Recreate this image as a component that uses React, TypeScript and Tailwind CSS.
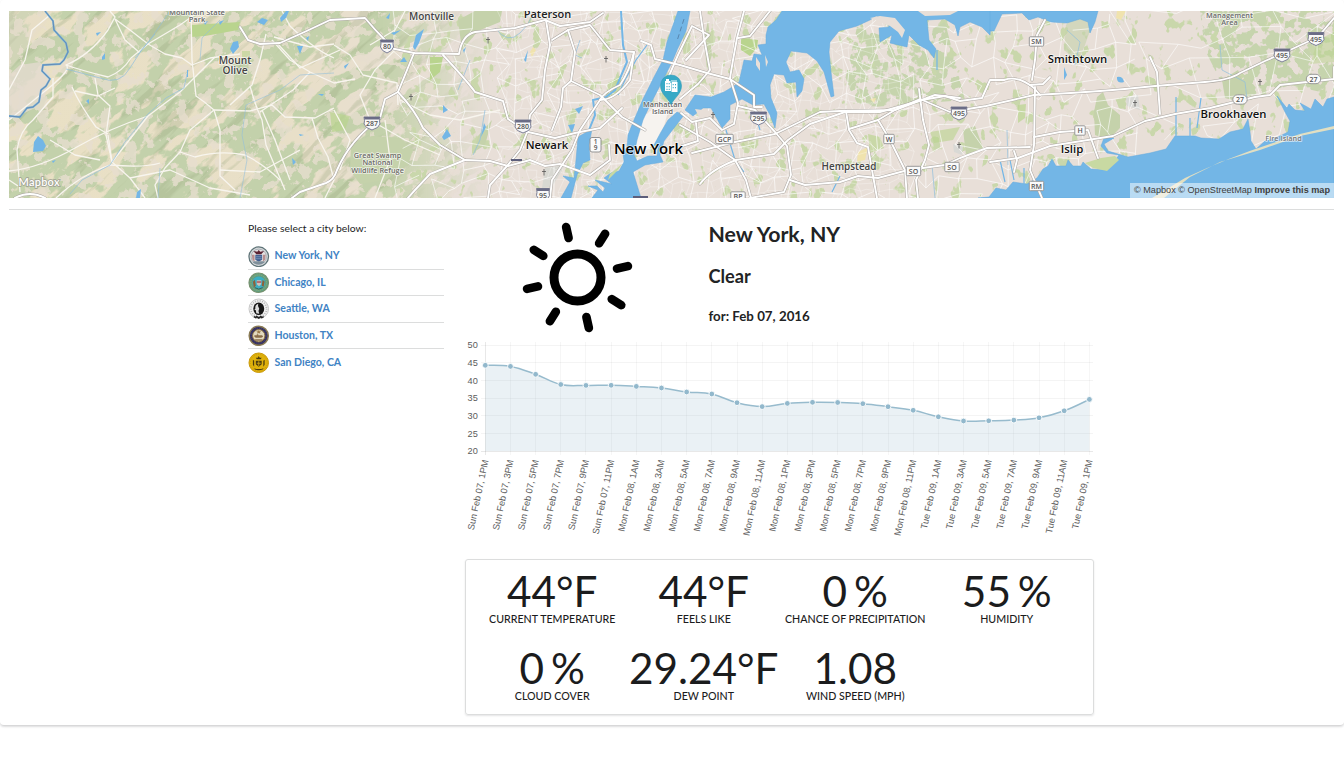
import React from "react";

const T = { fontFamily: '"Open Sans","Noto Sans",sans-serif' };

const terrainRoads = [
  "M9 120 Q28 105 50 87 T66 65 Q80 70 108 77 Q122 72 131 58 L148 44 L180 25 L200 11",
  "M66 65 Q90 55 108 30 L115 17 L110 11", "M9 171 Q40 168 75 148 T148 116 L180 92 L215 57",
  "M115 19 L130 30 L148 44 L165 54 L182 58 L192 65 Q203 61 210 58 L240 54",
  "M20 192 L17 150 Q20 130 33 120 L53 97 L53 78", "M72 87 Q80 105 96 127 L108 134",
  "M95 78 L98 95 L110 106 L106 135 L112 162 L148 116", "M108 135 L112 162 L130 178 L145 198",
  "M75 91 L98 96 L115 88", "M191 11 L192 60 L196 96 Q205 102 214 110 L220 130 L220 176 L235 190",
  "M214 110 L190 130 L180 152 L165 168 L155 185 L158 198", "M180 152 L195 157 Q220 150 245 155 Q265 165 280 180",
  "M9 180 L18 186", "M56 198 Q80 175 110 165 Q145 168 160 163", "M266 34 L260 60 L252 85 L230 105",
  "M272 40 L290 60 L310 72 L334 83 L355 79", "M214 110 L250 111 L272 105 L285 117 L315 118 L334 108",
  "M274 37 L310 47 L334 44", "M250 86 Q255 105 262 120 L266 145 L285 190", "M262 110 L275 140 L290 180",
  "M312 118 L318 138 L328 157 L334 180 L325 198", "M276 42 L300 68 L340 50", "M310 72 L293 90 L260 112",
  "M334 45 L350 55 L363 75 L397 83 L398 105", "M290 26 Q315 50 334 58", "M290 26 L282 11",
  "M9 90 L25 60 L32 30 L50 15", "M115 19 L125 40 L140 53", "M50 140 L75 155 L100 160",
  "M130 178 L170 170 L210 188 L250 195", "M220 170 L260 172 L300 150", "M395 50 L375 70 L360 95 L370 120 L405 140 L440 155",
  "M334 110 L350 140 L340 170", "M405 11 L395 30 L370 45", "M385 120 L390 160 L375 198", "M400 100 L430 115 L460 120 L500 110"
];
const majorRoads = [
  "M240 27 L248 40 L260 44 L280 43 Q305 32 330 20 L365 18 Q375 30 385 40 L390 48 L414 53 L459 54 Q462 35 475 32 L515 28 L545 20 L560 26 L590 22 L603 13",
  "M443 55 Q468 82 475 92 L503 101 L508 119 L528 132 L555 138 L575 133 L600 128 L622 108",
  "M414 53 L398 92 L385 99 L380 118 Q350 140 337 170 Q334 180 326 183 L300 192 L292 198",
  "M398 92 Q415 110 423 128 L440 145 L465 160 L430 174 L415 190 L408 198", "M465 160 L490 161 L508 166 L530 160 L545 166 L560 164 L590 175 L610 160 L609 145",
  "M546 20 L550 45 L545 70 L542 100 L530 115 L528 130 L520 150 L507 166 L490 185 L488 198",
  "M571 81 L563 88 L561 107 L552 130", "M568 30 L575 52 L571 81 L600 95 L622 117 L645 130",
  "M634 52 L630 80 Q615 100 600 100 L580 130 L572 150 L552 180 L550 198",
  "M600 100 Q604 92 620 85 Q630 70 634 52 L610 50 L590 25 L568 30 L552 40",
  "M641 41 L651 45 L655 59 L680 65 L707 73 L730 79 L754 95 L754 107 L762 107",
  "M686 60 L709 35 L692 26 L678 55 L665 85", "M744 11 L737 38 L733 60 L730 78 L738 103 L734 124 L722 130 L710 118 L692 122 L681 113",
  "M700 11 L704 38 L710 70 L698 84 L680 99", "M770 11 L750 36 L738 38", "M738 106 L755 110 L775 132 L787 146 L791 175 L784 192 L750 198",
  "M692 153 L735 142 L775 134 L820 112 L840 111 L895 110 L935 95 L960 98",
  "M700 184 Q710 170 736 160 L774 154 L788 140 L810 124 L845 112 L880 112 L905 105 L922 100 L945 96 L960 101 L982 98 L990 80 L1004 80 Q1018 75 1034 88 L1040 95",
  "M846 111 L849 130 L857 143 L868 147 L872 170 L877 198",
  "M849 129 L878 120 L895 110 L920 99 L950 112 L986 106 L1034 95 Q1100 92 1155 86 L1205 82 Q1230 80 1240 73 L1265 61 L1290 50 L1318 37 L1334 18",
  "M919 89 L923 120 L929 145 L925 160 L916 180 L918 198",
  "M878 120 L890 140 L905 170 L907 198", "M790 180 L805 185 L840 182 L858 176 L878 178 L908 170 L945 165 L960 158 L987 148 L1030 147",
  "M1035 87 L1034 145 L1030 170 L1042 198", "M1045 20 L1037 35 L1035 60 L1032 80", "M1030 85 L1043 84 L1050 77",
  "M1150 57 L1157 72 L1160 114", "M990 162 L1018 158 L1050 146 L1113 136 L1145 121 L1175 114 L1210 108 L1255 97 L1270 95 L1280 85 L1334 79 L1334 67",
  "M1034 137 L1060 132 L1088 130 L1098 158", "M1014 151 L1017 160 L1014 172",
  "M680 125 L710 142 L735 160 L746 180 L751 198", "M696 123 L698 141 L682 146"
];

function mesh(x0: number, x1: number, y0: number, y1: number, step: number, seed: number) {
  let s = seed;
  const r = () => { s = (s * 16807) % 2147483647; return s / 2147483647; };
  const cols = Math.ceil((x1 - x0) / step), rows = Math.ceil((y1 - y0) / step);
  const p: number[][][] = [];
  for (let i = 0; i <= cols; i++) {
    p.push([]);
    for (let j = 0; j <= rows; j++) p[i].push([x0 + i * step + (r() - 0.5) * step * 0.9, y0 + j * step + (r() - 0.5) * step * 0.9]);
  }
  let d = "";
  for (let i = 0; i <= cols; i++) for (let j = 0; j <= rows; j++) {
    const a = p[i][j];
    if (i < cols && r() > 0.22) d += `M${a[0].toFixed(1)} ${a[1].toFixed(1)}L${p[i + 1][j][0].toFixed(1)} ${p[i + 1][j][1].toFixed(1)}`;
    if (j < rows && r() > 0.22) d += `M${a[0].toFixed(1)} ${a[1].toFixed(1)}L${p[i][j + 1][0].toFixed(1)} ${p[i][j + 1][1].toFixed(1)}`;
  }
  return d;
}
const suburbs = mesh(400, 1130, 11, 200, 17, 77);
const urban = mesh(500, 910, 11, 200, 10, 913);
const east = mesh(1120, 1334, 11, 140, 26, 41);

type Label = [number, number, string, number, string?, number?];
const labels: Label[] = [
  [235, 64, "Mount", 10.2], [235, 74, "Olive", 10.2], [431.5, 19.8, "Montville", 10],
  [849, 170.3, "Hempstead", 9.9], [547.5, 18.3, "Paterson", 11, "#222", 600], [547, 149.3, "Newark", 11.3, "#111", 600],
  [648.5, 154, "New York", 14.9, "#000", 600], [1077.5, 62.7, "Smithtown", 11.3, "#111", 600],
  [1072, 153.2, "Islip", 11.4, "#111", 600], [1233.5, 118, "Brookhaven", 11.3, "#111", 600],
  [197, 15, "Mountain State", 7.5, "#666"], [197, 22, "Park", 7.5, "#666"],
  [377.5, 158, "Great Swamp", 7.3, "#6b6b66"], [377.5, 165.3, "National", 7.3, "#6b6b66"], [377.5, 172.6, "Wildlife Refuge", 7.3, "#6b6b66"],
  [662.5, 106.5, "Manhattan", 7.3, "#666"], [662.5, 113.5, "Island", 7.3, "#666"],
  [1229.5, 18, "Management", 7.3, "#6b6b6b"], [1229.5, 25, "Area", 7.3, "#6b6b6b"], [1283.5, 140.5, "Fire Island", 7.3, "#777"]
];

function Interstate({ x, y, n }: { x: number; y: number; n: string }) {
  const w = n.length > 2 ? 8 : 6.5;
  return (
    <g transform={`translate(${x} ${y})`}>
      <path d={`M${-w} -6H${w}Q${w - 1} -2 ${w} 1Q${w - 1} 5 0 7Q${1 - w} 5 ${-w} 1Q${1 - w} -2 ${-w} -6Z`} fill="#f8f8f8" stroke="#7d7f95" strokeWidth="1" />
      <path d={`M${-w} -6H${w}L${w - 0.7} -3.6H${0.7 - w}Z`} fill="#6a6c86" />
      <text x="0" y="3.4" textAnchor="middle" fontSize="7" fontWeight="600" fill="#555" style={T}>{n}</text>
    </g>
  );
}
function Plate({ x, y, n, round }: { x: number; y: number; n: string; round?: boolean }) {
  const w = n.length > 2 ? 8.7 : n.length > 1 ? 7.2 : 5.2;
  return (
    <g transform={`translate(${x} ${y})`}>
      <rect x={-w} y={-4.7} width={w * 2} height={9.4} rx={round ? 4.7 : 1} fill="#fafafa" stroke="#8f8f8f" strokeWidth="0.9" />
      <text x="0" y="2.6" textAnchor="middle" fontSize="7" fontWeight="600" fill="#555" style={T}>{n}</text>
    </g>
  );
}

const WATER = "#73b6e6";

function CityMap() {
  return (
    <svg className="block h-[187px] w-full" viewBox="9 11 1325 187" preserveAspectRatio="none">
      <defs>
        <filter id="forest" x="0" y="0" width="100%" height="100%" colorInterpolationFilters="sRGB">
          <feTurbulence type="fractalNoise" baseFrequency="0.024 0.05" numOctaves="5" seed="8" />
          <feColorMatrix values="0 0 0 0 .765  0 0 0 0 .82  0 0 0 0 .67  18 0 0 0 -7.6" />
        </filter>
        <filter id="hills" x="0" y="0" width="100%" height="100%" colorInterpolationFilters="sRGB">
          <feTurbulence type="fractalNoise" baseFrequency="0.014 0.1" numOctaves="4" seed="21" />
          <feColorMatrix values="0 0 0 0 .6  0 0 0 0 .66  0 0 0 0 .5  9 0 0 0 -5.1" />
        </filter>
        <filter id="parks" x="0" y="0" width="100%" height="100%" colorInterpolationFilters="sRGB">
          <feTurbulence type="fractalNoise" baseFrequency="0.085 0.065" numOctaves="3" seed="5" />
          <feColorMatrix values="0 0 0 0 .79  0 0 0 0 .845  0 0 0 0 .67  16 0 0 0 -10" />
        </filter>
        <filter id="woods" x="0" y="0" width="100%" height="100%" colorInterpolationFilters="sRGB">
          <feTurbulence type="fractalNoise" baseFrequency="0.09" numOctaves="3" seed="12" />
          <feColorMatrix values="0 0 0 0 .775  0 0 0 0 .83  0 0 0 0 .68  16 0 0 0 -7.2" />
        </filter>
        <filter id="meadow" x="0" y="0" width="100%" height="100%" colorInterpolationFilters="sRGB">
          <feTurbulence type="fractalNoise" baseFrequency="0.08" numOctaves="4" seed="33" />
          <feColorMatrix values="0 0 0 0 .905  0 0 0 0 .872  0 0 0 0 .81  18 0 0 0 -10" />
        </filter>
        <linearGradient id="land"><stop offset="0" stopColor="#e9e0c4" /><stop offset=".22" stopColor="#e8dfc8" /><stop offset=".34" stopColor="#e8dfd8" /></linearGradient>
        <linearGradient id="fade"><stop offset="0" stopColor="#fff" /><stop offset=".78" stopColor="#fff" /><stop offset="1" stopColor="#000" /></linearGradient>
        <mask id="west" maskUnits="userSpaceOnUse" x="0" y="0" width="520" height="210"><rect x="0" y="0" width="490" height="210" fill="url(#fade)" /></mask>
        <clipPath id="northShore"><path d="M857 27L905 44L945 22L965 100L860 108L845 80Z" /></clipPath>
        <clipPath id="pines"><path d="M1200 11H1334V95L1290 85L1250 100L1220 80L1205 50Z" /></clipPath>
      </defs>
      <rect x="9" y="11" width="1325" height="187" fill="url(#land)" />
      <g mask="url(#west)">
        <g transform="rotate(-40 250 100)"><rect x="-60" y="-180" width="640" height="560" filter="url(#forest)" /></g>
        <g transform="rotate(-43 250 100)" opacity=".3"><rect x="-60" y="-180" width="640" height="560" filter="url(#hills)" /></g>
        <rect x="9" y="11" width="500" height="187" filter="url(#meadow)" opacity=".8" />
      </g>
      <path d="M9 75L20 65L40 62L50 75L45 95L35 108L9 120Z" fill="#e4dbcf" opacity=".8" />
      <path d="M9 70L45 25L52 11H9Z" fill="#e6ddca" opacity=".4" />
      <rect x="400" y="11" width="934" height="187" filter="url(#parks)" />
      <g clipPath="url(#northShore)"><rect x="840" y="11" width="140" height="100" filter="url(#woods)" /></g>
      <g clipPath="url(#pines)"><rect x="1190" y="11" width="144" height="100" filter="url(#woods)" /></g>
      <g fill="#c5d2ab">
        <path d="M351 142L372 136L400 138L413 150L408 165L385 180L360 184L350 170Z" />
        <path d="M458 20L475 11L502 11L500 22L478 31L462 50Z" /><path d="M478 136L492 120L485 145L474 152Z" />
        <path d="M1097 97L1103 92L1108 105L1120 115L1120 128L1108 140L1095 135L1094 112Z" />
        <path d="M963 130L975 126L983 148L966 155Z" /><path d="M1070 20L1096 13L1085 45L1078 62L1064 50L1066 25Z" opacity=".6" />
        <path d="M1222 80L1238 70L1250 95L1240 102L1225 98Z" /><path d="M708 20L712 55L707 70L704 40Z" />
      </g>
      <g fill="#b9d48e">
        <path d="M191 25L240 22L238 30L205 36L191 37Z" /><path d="M430 57L443 57L440 72L430 80Z" /><path d="M330 112L350 116L345 130L332 132Z" opacity=".7" />
        <path d="M741 38L758 40L757 48L750 56L741 50Z" /><path d="M868 134L880 137L884 148L870 153Z" opacity=".65" /><path d="M608 83L622 75L620 92L605 100Z" opacity=".7" />
        <path d="M1018 105L1026 104L1025 118L1018 123Z" opacity=".7" /><path d="M930 132L960 127L953 140L934 143Z" opacity=".6" /><path d="M744 136L755 133L751 147L742 145Z" opacity=".5" />
        <path d="M242 51h8v6h-8z" opacity=".6" /><path d="M715 169L725 166L700 182L695 185Z" opacity=".6" />
        <path d="M1318 40L1334 32V62L1310 64Z" opacity=".5" />
      </g>
      <path d="M545 168L565 165L552 187L542 188Z" fill="#d8d8d2" /><path d="M1126 98L1138 95L1140 110L1127 106Z" fill="#d9d9d5" /><path d="M953 144L963 146L962 155L954 152Z" fill="#d9d9d5" />
      <path d="M533 47L536 50L532 57L530 52Z M858 152L868 147L865 160L857 162Z M870 99L876 98L874 103Z M1117 11L1126 11L1121 20L1116 18Z" fill="#f0e3ae" />
      <g fill="none" stroke="#fff" strokeLinejoin="round">
        <path d={suburbs} strokeWidth=".9" opacity=".7" /><path d={urban} strokeWidth=".7" opacity=".4" /><path d={east} strokeWidth=".9" opacity=".65" />
      </g>
      <path d="M632 140L642 118L655 107L668 112L660 140L640 155Z" fill="#f6f3ef" />
      <g fill="none" stroke="#f8f5ee" strokeWidth="1.3" strokeLinejoin="round">{terrainRoads.map((d) => <path key={d} d={d} />)}</g>
      <g fill="none" stroke="#8fbfdc" strokeWidth=".7">
        <path d="M155 34Q140 50 130 68T100 78L66 69M187 74L184 88L166 98L148 114L125 142L110 165L82 180L70 194" />
        <path d="M246 105L242 135L247 160L240 198M170 11L150 40L135 58M334 73L300 75L280 90L246 105M200 60L202 38L220 20M158 198L160 168" opacity=".8" />
        <path d="M495 28Q508 45 520 33T533 11M580 40L575 55L582 58M485 110L480 140L473 155M470 60L458 90M1067 30L1080 42L1075 65M1220 45L1222 70L1245 82L1247 100M1007 130L1008 165M932 165L935 198" />
      </g>
      <path d="M45 11L53 21L54 30L66 43L68 52L64 60L60 64L43 65L42 71L50 79L46 86L41 90L39 102L33 107L27 108L20 117L9 116" fill="none" stroke="#75b0d8" strokeWidth="1.900" />
      <path d="M45 11L53 21L54 30L66 43L68 52L64 60L60 64L43 65L42 71L50 79L46 86L41 90L39 102L33 107L27 108L20 117L9 116" fill="none" stroke="#5d7da8" strokeWidth=".7" />
      <g fill={WATER}>
        <path d="M34 142L38 136L43 140L46 146L43 151L33 152Z" /><path d="M230 49L233 42L238 41L239 47L233 54Z" /><path d="M102 57L105 53L105 59L102 60Z" /><path d="M257 22L262 18L268 20L264 25Z" /><path d="M280 18L286 11H289L286 18L281 22Z" /><path d="M297 46h6l-3 8zM306 38l3-2-1 5zM318 94h6l-2 2zM292 158l4 4-3 3zM299 134l5 1-4 1zM137 192l4-3-1 9h-4zM86 101l3-2v5zM96 33l5-1-4 4zM204 22l4-1-3 4zM219 22l5-2-4 5zM187 70h1v7h-1zM52 161l4-1-3 3z" />
        <path d="M413 47L416 35L424 29L419 43L415 50Z" /><path d="M400 62L404 57L407 62Z" /><path d="M443 105L448 110L443 113Z" /><path d="M442 137L447 129L451 136L444 140Z" /><path d="M391 33L401 30L394 35ZM386 18L390 13L389 19ZM568 125L575 124L572 133Z M575 109L583 106L579 114ZM524 60L528 50L526 62ZM463 50L466 47L464 53ZM344 66L349 63L345 69ZM484 123L486 127L481 137Z" />
        <path d="M1117 77Q1123 76 1124 82Q1118 84 1117 79Z" /><path d="M1064 67L1067 75L1064 80Z" />
      </g>
      <path d="M621 11L623 45L627 62L615 90L606 97L593 100L595 115L589 130" fill="none" stroke={WATER} strokeWidth="2" />
      <path d="M647 45L636 60L625 80L618 95" fill="none" stroke={WATER} strokeWidth="1.2" />
      <g fill={WATER} stroke="#62a8dc" strokeWidth=".5">
        <path d="M678 11H690L686 31L678 48L672 62L662 82L650 105L643 120L637 140L634 155L637 161L648 156L657 156L658 148L654 145L661 132L668 120L677 112L684 115L674 128L664 141L660 155L663 162L645 165L633 172L637 185L641 198H592L598 190L588 186L597 186L603 192L605 188L595 180L612 184L604 178L611 173L619 171L624 162L623 153L627 147L628 135L634 120L643 99L654 77L663 60L667 42Z" />
        <path d="M578 137L592 129L589 145L590 160L583 163L577 175L571 198H561L570 182L563 176L574 178L576 160Z" />
        <path d="M782 11L776 20L768 27L766 35L766 44L758 45L762 55L754 54L752 61L744 60L742 69L739 82L734 86L724 92L711 97L695 95L691 101L685 110L693 116L703 108L711 108L716 117L722 128L730 119L730 105L742 99L753 105L764 104L770 115L775 128L777 113L771 98L770 85L774 74L784 75L787 83L796 82L797 97L802 91L804 79L799 70L790 72L786 62L791 51L807 53L817 61L824 72L831 97L834 96L831 72L829 52L830 42L839 31L857 26L870 20L876 16L888 20L889 27L879 28L880 42L892 35L890 43L907 47L909 35L919 45L928 50L934 58L936 49L929 40L927 20L945 19L955 25L958 36L960 27L970 22L982 27L990 35L992 11Z" />
        <path d="M990 11H1098L1095 22L1090 33L1088 22L1080 19L1067 23L1051 22L1038 17L1029 20L1022 13L1002 14L994 31H990Z" />
        <path d="M978 198L989 197L996 188L1006 190L1013 182L1027 184L1037 178L1043 169L1048 166L1052 159L1056 166L1066 166L1068 160L1073 166L1081 166L1083 162L1091 169L1107 170L1119 155L1107 153L1101 146L1104 138L1114 138L1104 144L1108 151L1128 157L1150 153L1166 149L1175 136L1195 136L1201 138L1219 139L1230 132L1243 129L1248 119L1250 132L1251 141L1256 149L1265 141L1278 137L1288 132L1290 121L1285 112L1277 96L1287 108L1289 104L1295 110L1305 111L1300 103L1311 109L1315 99L1323 107L1327 99L1334 97V198Z" />
      </g>
      <path d="M921 11H954L948 15L930 16ZM1000 11H1052L1040 15L1020 12ZM1053 11H1084L1078 17L1068 20L1060 18Z" fill="none" />
      <g fill="#e8dfd8"><path d="M870 18L880 16L895 18L905 30L902 38L898 32L890 26Z" /><path d="M918 11H958L950 15L925 16Z" /><path d="M756 57L760 63L760 71L756 65ZM765 55L768 62L766 67Z" /><path d="M695 109L710 111L716 123L700 119Z" /></g>
      <path d="M1101 158L1115 156L1119 160L1107 171L1093 168L1085 163Z" fill="#c8d9a2" /><path d="M608 180L618 170L622 164L610 174Z" fill="#c8d9a2" />
      <g fill="none" stroke={WATER} strokeWidth="1.2"><path d="M1176 97V140M1190 118V144M1201 98L1197 128M726 130L735 160L744 172M840 176L832 192M937 50L937 70M757 120L760 130M1000 160L1005 182M1010 160L1014 180M1024 168V185" /></g>
      <path d="M1152 198L1185 178Q1230 157 1270 144L1300 134L1334 126V129L1300 136L1260 150L1220 162L1190 177L1164 198Z" fill="#e2dfc2" />
      <path d="M684 19L677 41" stroke="#4e7196" strokeWidth=".7" strokeDasharray="5 3" />
      <g fill="none" strokeLinejoin="round" strokeLinecap="round">
        {majorRoads.map((d) => <path key={d} d={d} stroke="#aca7a2" strokeWidth="2.9" />)}
        <path d="M15 198Q30 190 45 198" stroke="#a8a39e" strokeWidth="3" />
        {majorRoads.map((d) => <path key={d} d={d} stroke="#fff" strokeWidth="1.900" />)}
        <path d="M15 198Q30 190 45 198" stroke="#fff" strokeWidth="2" />
      </g>
      {[[488, 40], [411, 97], [606, 59], [544, 172], [713, 115], [959, 145], [1135, 103], [1260, 82]].map(([x, y]) => (
        <path key={x} d={`M${x} ${y - 3}v6.500M${x - 2} ${y - 0.5}h4`} stroke="#555" strokeWidth=".8" />
      ))}
      <Interstate x={387} y={46} n="80" /><Interstate x={372} y={123} n="287" /><Interstate x={523} y={126} n="280" />
      <Interstate x={543} y={194.5} n="95" /><Interstate x={758.5} y={118} n="295" /><Interstate x={959} y={113} n="495" />
      <Interstate x={1282} y={55} n="495" /><Interstate x={1316} y={38.5} n="495" />
      <path d="M511 159h11v2h-11zM633 196h15v2h-15z" fill="#5c5e7b" />
      <Plate x={724.5} y={139} n="GCP" /><Plate x={889} y={139} n="W" /><Plate x={913.5} y={171} n="SO" /><Plate x={952} y={167} n="SO" />
      <Plate x={738} y={196.5} n="BP" /><Plate x={1036.5} y={41.5} n="SM" /><Plate x={1080} y={130.5} n="H" /><Plate x={1036.5} y={186} n="RM" />
      <Plate x={1240} y={99.5} n="27" round /><Plate x={1313.5} y={79} n="27" round />
      <rect x="590" y="137.500" width="11" height="14.500" rx="2" fill="#fafafa" stroke="#888" strokeWidth=".9" />
      <text x="595.5" y="143.800" textAnchor="middle" fontSize="6.5" fontWeight="600" fill="#555" style={T}>1</text>
      <text x="595.5" y="150.300" textAnchor="middle" fontSize="6.5" fontWeight="600" fill="#555" style={T}>9</text>
      {labels.map(([x, y, s, size, fill, weight]) => (
        <text key={s} x={x} y={y} textAnchor="middle" fontSize={size} fill={fill ?? "#444"} fontWeight={weight ?? 600} stroke="#fff" strokeOpacity=".7" strokeWidth="1.6" strokeLinejoin="round" paintOrder="stroke" style={T}>{s}</text>
      ))}
      <g>
        <path d="M671 104.500C668 98 660.500 94 660.500 85.500A10.500 10.500 0 0 1 681.500 85.500C681.500 94 674 98 671 104.500Z" fill="#37a9c6" stroke="#2c9bb8" strokeWidth=".6" />
        <path d="M665 81h1v-2h3v2h1.500v2h1v-3h1v2h1v-2h1v2h1v-2h1v2h1v10h-6v-1h-6.500z" fill="#fff" />
        <path d="M666.500 83h1v1.200h-1zM668.700 83h1v1.200h-1zM666.500 86h1v1.200h-1zM668.700 86h1v1.200h-1zM666.500 88.700h1v1.200h-1zM668.700 88.700h1v1.200h-1zM672.700 84h1v1.200h-1zM675 84h1v1.200h-1zM672.700 87h1v1.200h-1zM675 87h1v1.200h-1zM671 81.500h.5v9.500h-.5z" fill="#37a9c6" />
      </g>
      <text x="18.500" y="185.500" fontSize="11" fontWeight="600" fill="#fff" stroke="#a09f92" strokeWidth="1.500" paintOrder="stroke" textLength="41" style={{ fontFamily: "Lato, sans-serif" }}>Mapbox</text>
    </svg>
  );
}

const seals = [
  <svg viewBox="0 0 22 22" className="h-[21.500px] w-[21.500px] shrink-0" key="ny">
    <circle cx="11" cy="11" r="10" fill="#d5d8da" stroke="#5f7478" strokeWidth="1.300" />
    <circle cx="11" cy="11" r="7.800" fill="#e6e2e2" stroke="#8997a0" strokeWidth=".6" />
    <path d="M7.500 9h7v5l-3.500 2-3.500-2z" fill="#405f91" /><path d="M5.500 5l4 1 1.500-2 1.500 2 4-1-3 3.500H8.500z" fill="#5c2434" />
    <path d="M4 9h2.700v7L4.500 14zM15.300 9H18l-.5 5-2.200 2z" fill="#b78d8d" /><path d="M5 17q6 4 12 0l-1-1.500H6z" fill="#7f8f9a" /><path d="M8 11h6M8 13h6" stroke="#8da6c4" strokeWidth=".7" />
  </svg>,
  <svg viewBox="0 0 22 22" className="h-[21.500px] w-[21.500px] shrink-0" key="chi">
    <circle cx="11" cy="11" r="10" fill="#5f9e83" stroke="#77916d" strokeWidth="1.200" /><circle cx="11" cy="11" r="8" fill="none" stroke="#9bb06d" strokeDasharray="1 1" />
    <circle cx="11" cy="11" r="6.500" fill="#3bafc4" /><path d="M9 8.500h4.500v4L11.300 14.500 9 12.500z" fill="#c9c3bd" /><path d="M9 9.500h4.500v1.500H9z" fill="#b0525a" />
    <path d="M5 10l2-2 1 6-2 2zM15 8l2 2-1 5-2-1z" fill="#8d6239" /><path d="M7 16q4 3 8 0" stroke="#385d50" fill="none" />
  </svg>,
  <svg viewBox="0 0 22 22" className="h-[21.500px] w-[21.500px] shrink-0" key="sea">
    <circle cx="11" cy="11" r="10" fill="#f1f1f1" stroke="#c6c6c6" /><circle cx="11" cy="11" r="8" fill="none" stroke="#b4b4b4" strokeDasharray="1 1.400" strokeWidth="1.800" />
    <ellipse cx="11" cy="11" rx="5.600" ry="6.500" fill="#171717" /><path d="M10.500 6q-3.500 1-3 5l-1 1 1.500.5.5 3 3 .5q-1.500-3 0-5-2-3-1-5z" fill="#ddd" /><path d="M6 19l2 1 1-1 2 1.500 2-1.500 1 1 2-1" stroke="#222" strokeWidth="1.500" fill="none" />
  </svg>,
  <svg viewBox="0 0 22 22" className="h-[21.500px] w-[21.500px] shrink-0" key="hou">
    <circle cx="11" cy="11" r="9.800" fill="#34305f" stroke="#8a7b54" strokeWidth="1.500" /><circle cx="11" cy="11" r="7.800" fill="none" stroke="#5a5685" strokeDasharray="1 1.300" strokeWidth=".7" />
    <circle cx="11" cy="11" r="6.300" fill="#e3dac0" stroke="#8f7641" /><path d="M11 5l.8 1.500 1.700.2-1.300 1L12.600 9 11 8.200 9.400 9l.4-1.300-1.300-1 1.700-.2z" fill="#9c7d4c" />
    <path d="M6.500 10.500h2.500V9.500h1.500v1h4l1 1.500-2 1H8l-1.500-1zM7 14.500h8v1.500H8z" fill="#8a6d49" />
  </svg>,
  <svg viewBox="0 0 22 22" className="h-[21.500px] w-[21.500px] shrink-0" key="sd">
    <circle cx="11" cy="11" r="10" fill="#e0b20b" stroke="#c9990b" /><circle cx="11" cy="11" r="8.500" fill="none" stroke="#c4970d" strokeDasharray="1 1.300" strokeWidth=".9" />
    <path d="M11 4l1 2h2l-1 1.500H9L8 6h2zM8 9h6v3.500L11 15l-3-2.500zM5 8l1.300 1v6L5 13zM17 8l-1.300 1v6L17 13zM6 16.500q5 2 10 0l-1 1.300q-4 1.500-8 0z" fill="#4b3b0d" /><path d="M11 9.500v5M9 11.500h4" stroke="#c99f10" />
  </svg>
];
const cities = ["New York, NY", "Chicago, IL", "Seattle, WA", "Houston, TX", "San Diego, CA"];

const ys = [365.3, 366.4, 374.3, 384.5, 385.4, 385.3, 386.4, 388, 392, 394, 402.7, 406.6, 403.4, 402.3, 402.5, 403.7, 406.7, 410.3, 416.8, 421, 420.8, 420.1, 417.8, 410.8, 399.4];
const pts = ys.map((y, i) => [485.3 + i * 25.17, y]);
const curve = pts.slice(1).reduce((d, p, k) => {
  const a = pts[k], before = pts[k - 1] ?? a, after = pts[k + 2] ?? p;
  return d + `C${a[0] + (p[0] - before[0]) * 0.2} ${a[1] + (p[1] - before[1]) * 0.2} ${p[0] - (after[0] - a[0]) * 0.2} ${p[1] - (after[1] - a[1]) * 0.2} ${p[0]} ${p[1]}`;
}, `M${pts[0][0]} ${pts[0][1]}`);
const hours = ["1AM", "3AM", "5AM", "7AM", "9AM", "11AM", "1PM", "3PM", "5PM", "7PM", "9PM", "11PM"];
const days = ["Sun Feb 07", "Mon Feb 08", "Tue Feb 09"];

function Chart() {
  return (
    <svg className="block h-[200px] w-[629px]" viewBox="465 340 629 200">
      <g stroke="#000" strokeWidth="1">
        {[0, 1, 2, 3, 4, 5, 6].map((i) => { const y = Math.floor(345 + i * 17.67) + 0.5; return <path key={i} d={`M481 ${y}H1093`} strokeOpacity={i === 6 ? 0.09 : 0.045} />; })}
        {pts.map(([x], i) => <path key={i} d={`M${Math.floor(x) + 0.5} 342V455`} strokeOpacity={i ? 0.035 : 0.09} />)}
      </g>
      <path d={`${curve}V451H485.300Z`} fill="#97bbcd" fillOpacity=".2" />
      <path d={curve} fill="none" stroke="#97bbcd" strokeWidth="1.500" />
      {pts.map(([x, y], i) => <circle key={i} cx={x} cy={y} r="2.900" fill="#92b8cc" stroke="#fff" strokeWidth=".9" />)}
      <g fontSize="9.2" fill="#5c5c5c" textAnchor="end" style={{ fontFamily: '"Liberation Sans", sans-serif' }}>
        {[50, 45, 40, 35, 30, 25, 20].map((v, i) => <text key={v} x="477.800" y={348.2 + i * 17.67}>{v}</text>)}
        {pts.map(([x], i) => (
          <text key={i} transform={`translate(${x + 3.2} 460.500) rotate(-78)`} x="0" y="0">{`${days[Math.floor((i + 6) / 12)]}, ${hours[(i + 6) % 12]}`}</text>
        ))}
      </g>
    </svg>
  );
}

const stats = [["44°F", "Current Temperature"], ["44°F", "Feels Like"], ["0 %", "Chance of Precipitation"], ["55 %", "Humidity"], ["0 %", "Cloud Cover"], ["29.24°F", "Dew Point"], ["1.08", "Wind Speed (mph)"]];

export default function App() {
  return (
    <div className="h-[758px] w-[1344px] overflow-hidden bg-white font-[Lato,sans-serif] text-[10.67px] text-[#1b1c1d]">
      <div className="h-[726px] rounded-sm border-b border-[#d8d8d9] pt-[11px] pl-[9px] shadow-[0_1px_2px_rgba(34,36,38,0.15)]">
        <div className="relative h-[187px] w-[1325px]">
          <CityMap />
          <div className="absolute right-0 bottom-0 flex h-[15px] w-[204px] items-center justify-center bg-white/50 font-['Liberation_Sans',sans-serif] text-[9.15px] whitespace-pre text-[#404040]">© Mapbox © OpenStreetMap <b>Improve this map</b></div>
        </div>
        <div className="mt-[11px] h-px w-[1325px] bg-[#dcdddd]" />
        <div className="flex">
          <aside className="ml-[239px] w-[196px] pt-[11px]">
            <p className="h-[22.600px] text-[10.400px] leading-[15px]">Please select a city below:</p>
            <ul>
              {cities.map((c, i) => (
                <li key={c} className="flex h-[26.450px] items-center gap-[5px] border-b border-[#dcdddd] text-[10.550px] font-bold text-[#4183c4] last:border-b-0">
                  {seals[i]}<a>{c}</a>
                </li>
              ))}
            </ul>
          </aside>
          <main className="ml-[21px] w-[629px]">
            <div className="flex h-[130px]">
              <svg className="mt-[7px] ml-[52px] block h-[120px] w-[120px]" viewBox="-60 -60 120 120">
                <g fill="none" stroke="#000" transform="translate(.5 .5)">
                  <circle r="23.500" strokeWidth="9" />
                  {[0, 1, 2, 3, 4, 5, 6, 7].map((k) => <path key={k} d="M40.500 0H51.700" strokeWidth="8.600" strokeLinecap="round" transform={`rotate(${-12.7 + k * 45})`} />)}
                </g>
              </svg>
              <div className="ml-[71.500px] font-bold text-[#222324]">
                <h1 className="pt-[11px] text-[21.300px] leading-[27px]">New York, NY</h1>
                <h2 className="pt-[16px] text-[18.200px] leading-[25px]">Clear</h2>
                <h3 className="pt-[17px] text-[13.300px] leading-[20px]">for: Feb 07, 2016</h3>
              </div>
            </div>
            <Chart />
            <section className="mt-[19px] grid h-[156px] w-[629px] grid-cols-4 content-start rounded-[3px] border border-[#dcdddd] px-[10.500px] pt-[10px] shadow-[0_1px_2px_rgba(34,36,38,0.12)]">
              {stats.map(([v, l]) => (
                <div key={l} className="flex h-[77px] flex-col items-center whitespace-nowrap">
                  <span className="text-[42.300px] leading-[42px] [word-spacing:-4px]">{v}</span>
                  <span className="mt-px leading-[12px] font-medium uppercase">{l}</span>
                </div>
              ))}
            </section>
          </main>
        </div>
      </div>
    </div>
  );
}
